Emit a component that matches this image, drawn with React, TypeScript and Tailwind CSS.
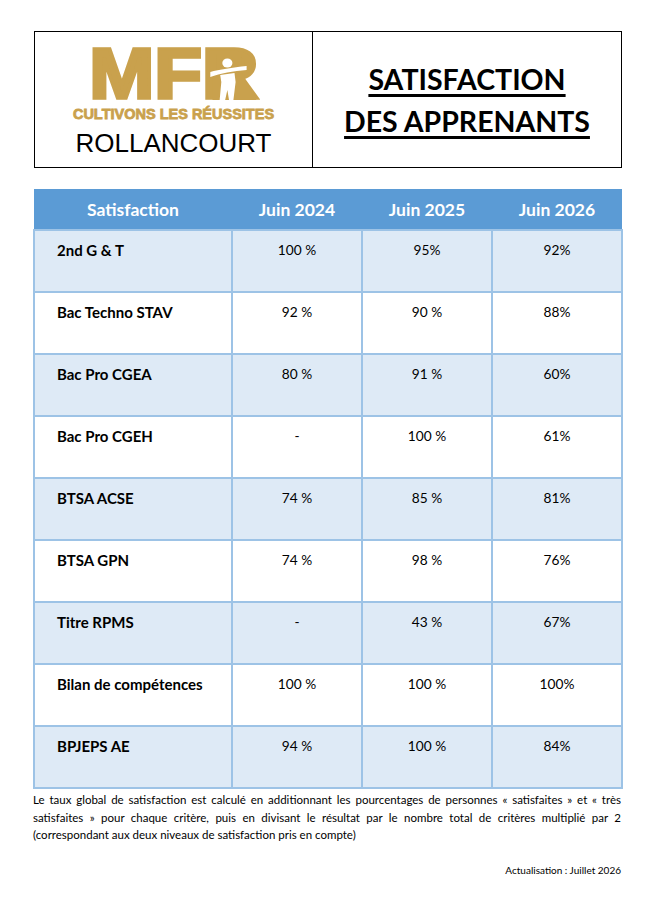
const rows = [
  { label: "2nd G & T", a: "100 %", b: "95%", c: "92%" },
  { label: "Bac Techno STAV", a: "92 %", b: "90 %", c: "88%" },
  { label: "Bac Pro CGEA", a: "80 %", b: "91 %", c: "60%" },
  { label: "Bac Pro CGEH", a: "-", b: "100 %", c: "61%" },
  { label: "BTSA ACSE", a: "74 %", b: "85 %", c: "81%" },
  { label: "BTSA GPN", a: "74 %", b: "98 %", c: "76%" },
  { label: "Titre RPMS", a: "-", b: "43 %", c: "67%" },
  { label: "Bilan de compétences", a: "100 %", b: "100 %", c: "100%" },
  { label: "BPJEPS AE", a: "94 %", b: "100 %", c: "84%" },
];

const Logo = () => {
  return (
    <div className="flex flex-col items-center pt-[4px]">
      <div className="relative scale-x-110">
        <span className="block font-['Liberation_Sans',sans-serif] font-bold text-[71px] leading-[52px] [-webkit-text-stroke:3.5px_#c9a14d] text-[#c9a14d]">
          MFR
        </span>
        {/* little figure cut into the R */}
        <svg className="absolute left-0 top-0" width="154" height="52" viewBox="0 0 154 52">
          <rect x="116" y="6" width="22" height="20" fill="#c9a14d" />
          <path d="M112 24 L138 24 L152 52 L112 52 Z" fill="#c9a14d" />
          <circle cx="125.5" cy="15" r="4.6" fill="#fff" />
          <path d="M110 24 C 118 21.5, 130 19.5, 143 18 L 143 22 C 131 23, 119 25.5, 110 29 Z" fill="#fff" />
          <path d="M119 27 L132 25 L133 34 L131 52 L127 52 L125.5 42 L123.5 52 L118.5 52 L120 34 Z" fill="#fff" />
        </svg>
      </div>
      <span className="mt-[7px] block font-['Liberation_Sans',sans-serif] font-bold text-[14.5px] leading-[14px] [-webkit-text-stroke:0.8px_#c9a14d] text-[#c9a14d]">
        CULTIVONS LES RÉUSSITES
      </span>
      <span className="mt-[9px] block font-['Liberation_Sans',sans-serif] text-[26px] leading-[26px] text-black">
        ROLLANCOURT
      </span>
    </div>
  );
};

export default function App() {
  return (
    <div className="w-[647px] h-[916px] bg-white font-['Lato',sans-serif] text-black">
      <div className="pt-[31px] pl-[34px]">
        <div className="flex w-[588px] h-[137px] border border-black">
          <div className="w-[278px] border-r border-black flex items-center justify-center">
            <Logo />
          </div>
          <div className="flex-1 flex flex-col items-center justify-center">
            <span className="font-bold text-[28.5px] leading-[42px] underline decoration-[3px] underline-offset-[4px]">
              SATISFACTION
            </span>
            <span className="font-bold text-[28.5px] leading-[42px] underline decoration-[3px] underline-offset-[4px]">
              DES APPRENANTS
            </span>
          </div>
        </div>
      </div>

      <table className="mt-[21px] ml-[33px] w-[588px] border-collapse table-fixed">
        <colgroup>
          <col className="w-[198px]" />
          <col className="w-[130px]" />
          <col className="w-[130px]" />
          <col className="w-[130px]" />
        </colgroup>
        <thead>
          <tr className="bg-[#5b9bd5] h-[41px]">
            <th className="pt-[2px] text-white font-bold text-[17.5px] text-center">Satisfaction</th>
            <th className="pt-[2px] text-white font-bold text-[17.5px] text-center">Juin 2024</th>
            <th className="pt-[2px] text-white font-bold text-[17.5px] text-center">Juin 2025</th>
            <th className="pt-[2px] text-white font-bold text-[17.5px] text-center">Juin 2026</th>
          </tr>
        </thead>
        <tbody>
          {rows.map((r, i) => (
            <tr key={r.label} className={i % 2 === 0 ? "bg-[#deeaf6] h-[62px]" : "bg-white h-[62px]"}>
              <td className="border-2 border-[#9dc3e6] align-top pt-[9px] pl-[22px] font-bold text-[15px] leading-[20px]">
                {r.label}
              </td>
              <td className="border-2 border-[#9dc3e6] align-top pt-[9px] text-center text-[13.7px] leading-[20px]">
                {r.a}
              </td>
              <td className="border-2 border-[#9dc3e6] align-top pt-[9px] text-center text-[13.7px] leading-[20px]">
                {r.b}
              </td>
              <td className="border-2 border-[#9dc3e6] align-top pt-[9px] text-center text-[13.7px] leading-[20px]">
                {r.c}
              </td>
            </tr>
          ))}
        </tbody>
      </table>

      <div className="ml-[33px] w-[588px] mt-[2px] text-[11.5px] leading-[17.5px]">
        <p className="text-justify [text-align-last:justify]">
          Le taux global de satisfaction est calculé en additionnant les pourcentages de personnes « satisfaites » et « très
        </p>
        <p className="text-justify [text-align-last:justify]">
          satisfaites » pour chaque critère, puis en divisant le résultat par le nombre total de critères multiplié par 2
        </p>
        <p>(correspondant aux deux niveaux de satisfaction pris en compte)</p>
        <p className="mt-[19px] text-right text-[10px] leading-[14px]">Actualisation : Juillet 2026</p>
      </div>
    </div>
  );
}
